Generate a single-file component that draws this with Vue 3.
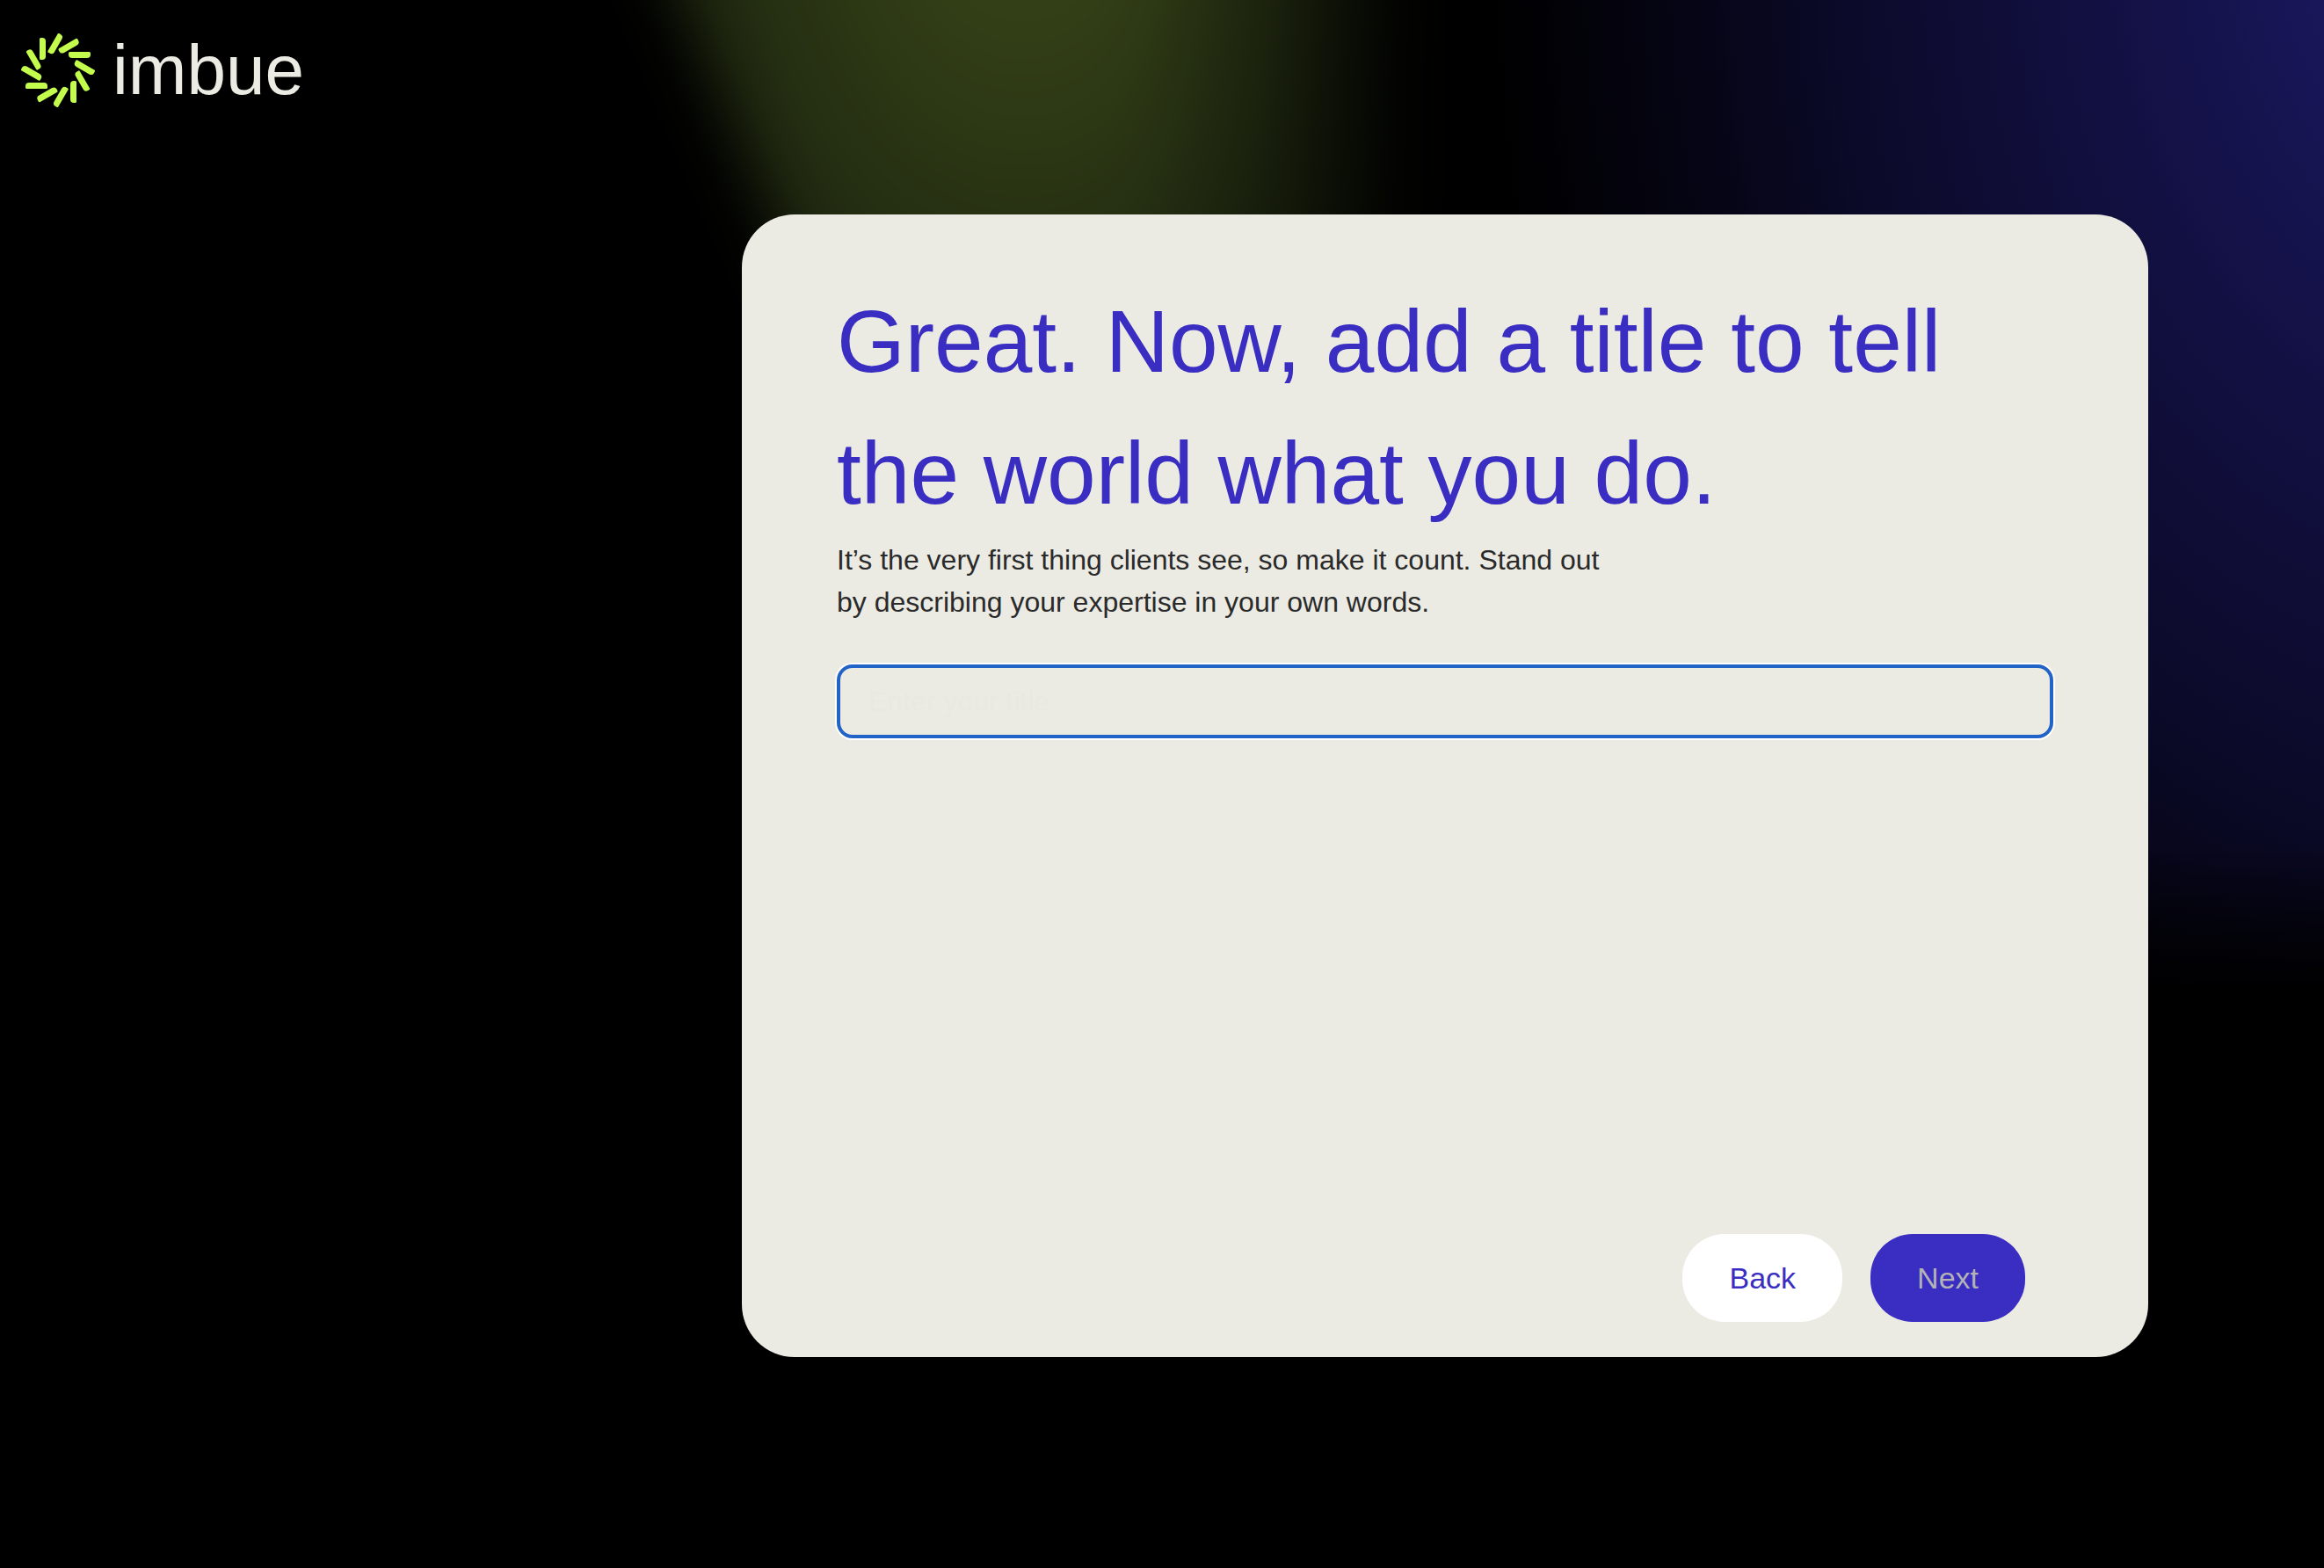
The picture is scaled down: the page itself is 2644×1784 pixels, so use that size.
<script setup>
import { ref } from 'vue'

const title = ref('')
const rays = Array.from({ length: 12 }, (_, i) => i * 30)
</script>

<template>
  <div class="page">
    <div class="glow" aria-hidden="true">
      <div class="glow-green"><div class="glow-green-shape"></div></div>
      <div class="glow-blue"></div>
    </div>

    <header class="header">
      <a class="brand" href="#" aria-label="imbue">
        <svg class="brand-mark" viewBox="-42 -42 84 84" aria-hidden="true">
          <path
            v-for="angle in rays"
            :key="angle"
            d="M-21 -35.5Q-21 -37 -19.5 -37H-18Q-14 -37 -14 -33V-16Q-14 -12 -18 -12H-19.5Q-21 -12 -21 -13.5Z"
            :transform="`rotate(${angle})`"
          />
        </svg>
        <span class="brand-name">imbue</span>
      </a>
    </header>

    <main class="content">
      <form class="card" @submit.prevent>
        <h1 class="heading">Great. Now, add a title to tell the world what you do.</h1>
        <label class="hint" for="title">
          It’s the very first thing clients see, so make it count. Stand out by describing your
          expertise in your own words.
        </label>
        <input id="title" v-model="title" class="field" type="text" placeholder="Enter your title" />
        <div class="actions">
          <button class="button button-back" type="button">Back</button>
          <button class="button button-next" type="submit" :disabled="!title">Next</button>
        </div>
      </form>
    </main>
  </div>
</template>

<style>
body {
  background: #000;
}
</style>

<style scoped>
.page {
  position: relative;
  min-height: 100vh;
  box-sizing: border-box;
  padding-bottom: 84px;
  background: #000;
  font-family: "Liberation Sans", Arial, sans-serif;
}

.glow {
  position: absolute;
  inset: 0;
  overflow: hidden;
  pointer-events: none;
}

.glow-green,
.glow-blue {
  position: absolute;
  inset: 0;
}

.glow-green {
  inset: -200px 0 0;
  filter: blur(36px);
}

.glow-green-shape {
  height: 800px;
  background: radial-gradient(ellipse 24vw 1000px at 44vw 0, #3a481b 0%, #323e16 25%, #242e12 52%, #161c0b 80%, #0a0d04 100%);
  clip-path: polygon(26vw 0, 62vw 0, 62vw 100%, 39vw 100%);
  mask-image: linear-gradient(to right, #000 49vw, rgb(0 0 0 / 70%) 55vw, transparent 61vw);
}

.glow-blue {
  background: radial-gradient(
    ellipse 42vw 1600px at 106vw -100px,
    #1e1a68 0%,
    #1a175c 14%,
    #15134c 28%,
    #100e3a 46%,
    #0b0a29 64%,
    #050412 82%,
    #000 100%
  );
  mask-image: linear-gradient(to bottom, #000 960px, transparent 1130px);
  mix-blend-mode: screen;
}

.header {
  position: relative;
  display: flex;
  padding: 38px 24px;
}

.brand {
  display: flex;
  align-items: center;
  gap: 20px;
  color: #ebebe3;
  text-decoration: none;
}

.brand-mark {
  width: 84px;
  height: 84px;
  fill: #c3fc4c;
}

.brand-name {
  font-size: 80px;
  line-height: 84px;
}

.content {
  position: relative;
  display: flex;
  justify-content: flex-end;
  padding: 84px 200px 0;
}

.card {
  display: flex;
  flex-direction: column;
  box-sizing: border-box;
  width: 100%;
  max-width: 1600px;
  min-height: 1300px;
  padding: 69px 108px 40px;
  border-radius: 60px;
  background: #ebebe3;
}

.heading {
  margin: 0;
  color: #3a2dc1;
  font-size: 100px;
  font-weight: 400;
  line-height: 150px;
}

.hint {
  max-width: 900px;
  color: #2a2a2a;
  font-size: 32px;
  line-height: 48px;
}

.field {
  box-sizing: border-box;
  width: 100%;
  height: 84px;
  margin: 47px 0;
  padding: 0 32px;
  border: 4px solid #2163c7;
  border-radius: 18px;
  outline: none;
  box-shadow: 0 0 0 2px #fff;
  background: transparent;
  color: #2a2a2a;
  font: inherit;
  font-size: 32px;
}

.field::placeholder {
  color: #e9e9e1;
  opacity: 1;
}

.actions {
  display: flex;
  justify-content: flex-end;
  gap: 32px;
  margin: auto 32px 0 0;
}

.button {
  height: 100px;
  padding: 0 53px;
  border: 0;
  border-radius: 48px;
  font: inherit;
  font-size: 34px;
}

.button-back {
  background: #fff;
  color: #3a2dc1;
}

.button-next {
  background: #3a2dc1;
  color: #fff;
}

.button-next:disabled {
  color: #b3b2b5;
}
</style>
